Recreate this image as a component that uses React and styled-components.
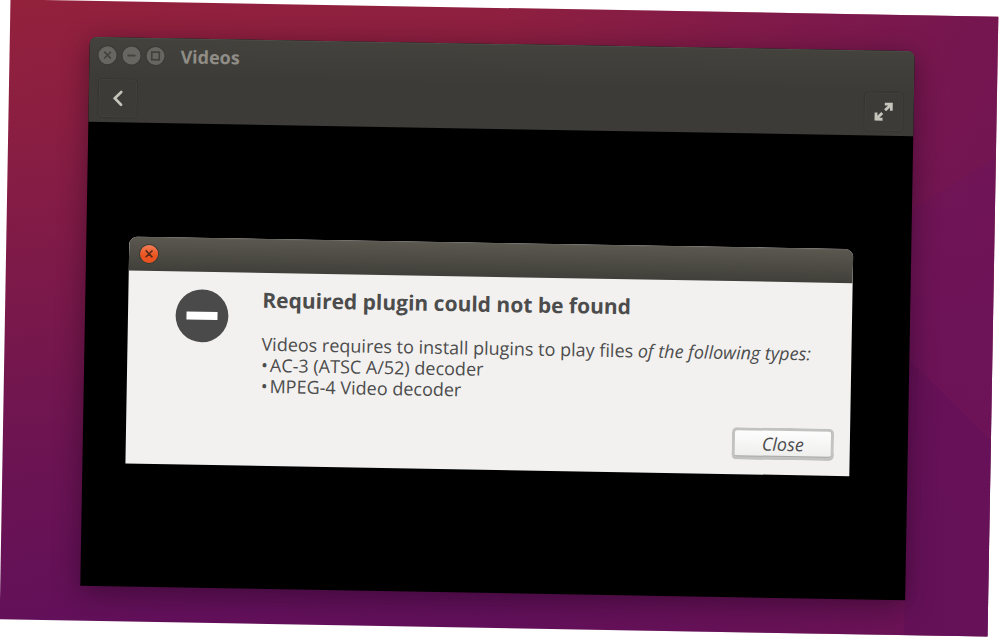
import React, { useState } from 'react'
import styled, { createGlobalStyle } from 'styled-components'

const GlobalStyle = createGlobalStyle`
  * {
    box-sizing: border-box;
  }
  body {
    margin: 0;
    background: #fff;
    font-family: 'Open Sans', 'Noto Sans', sans-serif;
  }
  button {
    font-family: inherit;
    padding: 0;
    border: 0;
    cursor: pointer;
  }
`

const Page = styled.main`
  display: flex;
  min-height: 100vh;
  padding: 8px 7px 11px 5px;
  overflow: hidden;
`

const Desktop = styled.div`
  position: relative;
  display: flex;
  flex: 1;
  padding: 36px 83px 35px 80px;
  transform: rotate(1deg);
  background:
    linear-gradient(90deg, rgba(112, 20, 84, 0) 50%, rgba(112, 20, 84, 0.8) 100%),
    linear-gradient(172deg, #93213c 0%, #8a1e42 18%, #6c1452 60%, #62105a 84%, #62105a 100%);
`

const Wallpaper = styled.svg`
  position: absolute;
  inset: 0;
  width: 100%;
  height: 100%;
`

const Window = styled.section`
  position: relative;
  display: flex;
  flex-direction: column;
  flex: 1;
  border-radius: 7px 7px 0 0;
  background: #000;
  box-shadow: 0 6px 28px rgba(20, 0, 20, 0.45);
`

const Header = styled.header`
  padding-bottom: 4px;
  border-radius: 7px 7px 0 0;
  background: linear-gradient(#43423d, #3c3b37 50%);
  box-shadow: inset 0 1px #4b4d47;
`

const TitleBar = styled.div`
  display: flex;
  align-items: center;
  gap: 6px;
  height: 36px;
  padding: 0 9px;
`

const Title = styled.h1`
  margin: 0 0 0 10px;
  font-size: 18px;
  line-height: 24px;
  color: #8f8d86;
`

const RoundButton = styled.button`
  display: flex;
  align-items: center;
  justify-content: center;
  width: 18px;
  height: 18px;
  border-radius: 50%;
  color: ${({ $active }) => ($active ? '#5a2a18' : '#42413c')};
  background: ${({ $active }) => ($active ? 'linear-gradient(#f37e58, #e9531f 60%)' : '#676660')};
  box-shadow: 0 0 0 1px ${({ $active }) => ($active ? '#3d3b34' : '#3a3935')};
`

const ToolBar = styled.div`
  display: flex;
  justify-content: space-between;
  padding: 5px 10px 0 9px;
`

const ToolButton = styled.button`
  display: flex;
  align-items: center;
  justify-content: center;
  width: 40px;
  height: 40px;
  border-radius: 5px;
  color: #c6c4bb;
  background: #3c3b37;
  box-shadow: inset 0 0 0 1px #353430, inset 0 0 0 2px #42413d;
`

const Video = styled.div`
  display: flex;
  align-items: center;
  flex: 1;
  padding: 113px 58px 123px 43px;
`

const Dialog = styled.div`
  flex: 1;
  border-radius: 8px 8px 0 0;
  overflow: hidden;
  background: #f2f1f0;
`

const DialogBar = styled.div`
  display: flex;
  align-items: center;
  height: 34px;
  padding: 0 11px;
  background: linear-gradient(#5b5850, #403f39);
  box-shadow: inset 0 1px #625f57;
`

const DialogBody = styled.div`
  display: flex;
  gap: 33px;
  padding: 13px 18px 0 47px;
`

const Message = styled.div`
  color: #4c4c4c;
`

const Heading = styled.h2`
  margin: 0 0 20px;
  font-size: 21px;
  line-height: 28px;
`

const Text = styled.p`
  margin: 0;
  font-size: 18px;
  line-height: 21px;
  white-space: nowrap;
`

const Plugins = styled.ul`
  margin: 0;
  padding: 0;
  list-style: none;
  font-size: 18px;
  line-height: 21px;
`

const Plugin = styled.li`
  &::before {
    content: '•';
    margin-right: 2px;
  }
`

const Actions = styled.div`
  display: flex;
  justify-content: flex-end;
  padding: 22px 16px 15px;
`

const CloseButton = styled.button`
  width: 102px;
  height: 32px;
  border-radius: 5px;
  font-size: 18px;
  font-style: italic;
  color: #4c4c4c;
  background: linear-gradient(#ffffff, #ececeb);
  box-shadow: inset 0 0 0 3px #c2c2c1, inset 0 -4px #a9a9a8;
`

const plugins = ['AC-3 (ATSC A/52) decoder', 'MPEG-4 Video decoder']

const CrossIcon = () => (
  <svg width="10" height="10" viewBox="0 0 10 10" stroke="currentColor" strokeWidth="1.6">
    <path d="M1.6 1.6l6.8 6.8M8.4 1.6l-6.8 6.8" />
  </svg>
)

const App = () => {
  const [open, setOpen] = useState(true)

  return (
    <Page>
      <GlobalStyle />
      <Desktop>
        <Wallpaper viewBox="0 0 988 620" preserveAspectRatio="none" aria-hidden="true">
          <path d="M988 140L905 195V620H988z" fill="#6b1560" opacity="0.3" />
          <path d="M905 345L988 425V620H905z" fill="#5f1058" opacity="0.5" />
        </Wallpaper>
        <Window>
          <Header>
            <TitleBar>
              <RoundButton aria-label="Close window">
                <CrossIcon />
              </RoundButton>
              <RoundButton aria-label="Minimize">
                <svg width="10" height="10" viewBox="0 0 10 10" stroke="currentColor" strokeWidth="1.8">
                  <path d="M1 5h8" />
                </svg>
              </RoundButton>
              <RoundButton aria-label="Maximize">
                <svg width="10" height="10" viewBox="0 0 10 10" fill="none" stroke="currentColor" strokeWidth="1.8">
                  <rect x="1.2" y="1.2" width="7.6" height="7.6" />
                </svg>
              </RoundButton>
              <Title>Videos</Title>
            </TitleBar>
            <ToolBar>
              <ToolButton aria-label="Back">
                <svg width="18" height="18" viewBox="0 0 18 18" fill="none" stroke="currentColor" strokeWidth="2.6" strokeLinecap="round">
                  <path d="M12.4 2.6L6 9l6.4 6.4" />
                </svg>
              </ToolButton>
              <ToolButton aria-label="Fullscreen">
                <svg width="20" height="20" viewBox="0 0 20 20" fill="none" stroke="currentColor" strokeWidth="2.8">
                  <path d="M11 2.4h6.6V9M17.4 2.6l-6 6" />
                  <path d="M9 17.6H2.4V11M2.6 17.4l6-6" />
                </svg>
              </ToolButton>
            </ToolBar>
          </Header>
          <Video>
            {open && (
              <Dialog role="dialog" aria-labelledby="dialog-title">
                <DialogBar>
                  <RoundButton $active aria-label="Close dialog" onClick={() => setOpen(false)}>
                    <CrossIcon />
                  </RoundButton>
                </DialogBar>
                <DialogBody>
                  <svg width="54" height="62" viewBox="0 0 54 62" aria-hidden="true">
                    <circle cx="27" cy="31" r="26.4" fill="#4a4a4a" />
                    <rect x="11.5" y="27" width="31" height="8" fill="#fff" />
                  </svg>
                  <Message>
                    <Heading id="dialog-title">Required plugin could not be found</Heading>
                    <Text>
                      Videos requires to install plugins to play files <em>of the following types:</em>
                    </Text>
                    <Plugins>
                      {plugins.map((name) => (
                        <Plugin key={name}>{name}</Plugin>
                      ))}
                    </Plugins>
                  </Message>
                </DialogBody>
                <Actions>
                  <CloseButton onClick={() => setOpen(false)}>Close</CloseButton>
                </Actions>
              </Dialog>
            )}
          </Video>
        </Window>
      </Desktop>
    </Page>
  )
}

export default App
